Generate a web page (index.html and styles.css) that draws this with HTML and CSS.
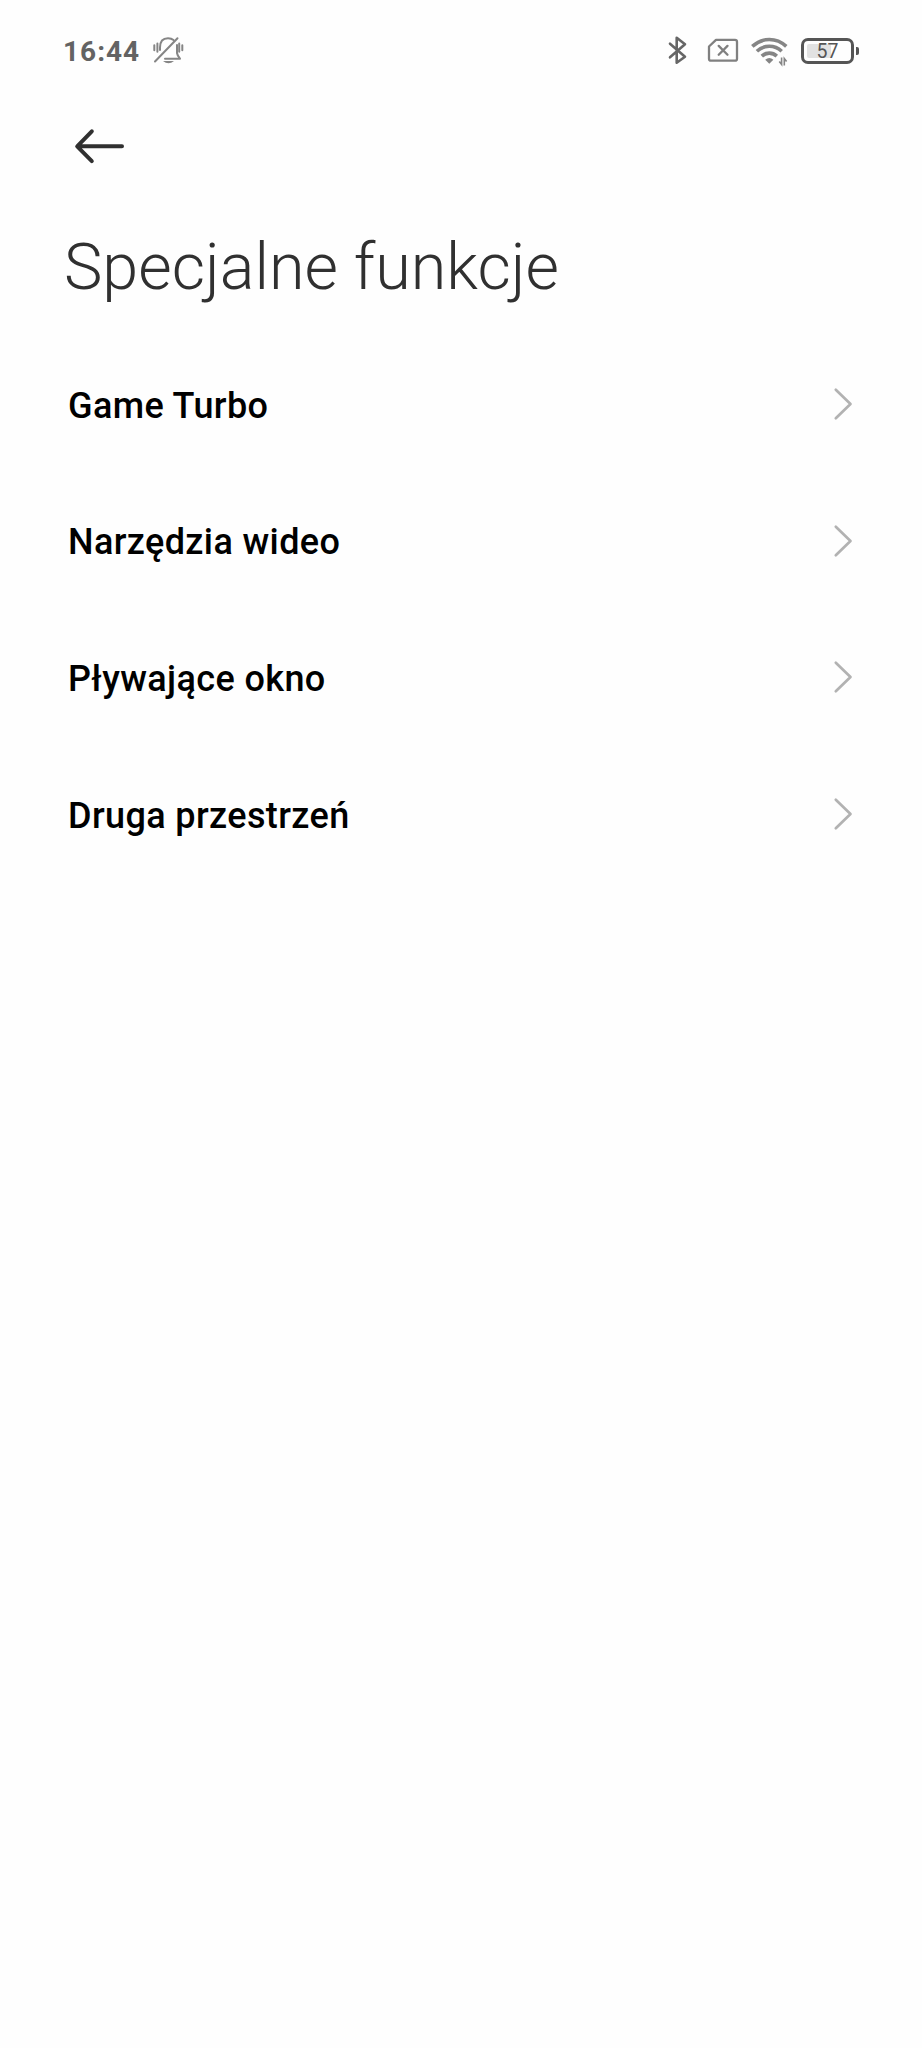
FILE: index.html
```html
<!DOCTYPE html>
<html lang="pl">
<head>
<meta charset="utf-8">
<title>Specjalne funkcje</title>
<link rel="stylesheet" href="styles.css">
</head>
<body>
<header class="status">
  <span class="clock">16:44</span>
  <svg class="bell" width="34" height="34" viewBox="151 34 34 34">
    <path d="M160 50V47.5Q160 38.2 168 38.2Q171.500 38.200 173.500 40M177 45V53Q177.400 55.800 180 58.700H165"/>
    <path d="M155 61.500L177.500 38.200M154.300 45.200v5M157.400 43.500v8.200M179.200 43.500v8.200M182.300 45.200v5"/>
    <path class="solid" d="M163 61h11q-5.500 4.500-11 0z"/>
  </svg>
  <span class="spacer"></span>
  <svg class="bluetooth" width="24" height="34" viewBox="665 34 24 34">
    <path d="M670 43.700L685 56.700L676.700 62.700V37.800L685 44.300L670 57.300"/>
  </svg>
  <svg class="sim" width="36" height="34" viewBox="705 34 36 34">
    <path d="M716 39.800H735Q737 39.800 737 41.800V58.700Q737 60.700 735 60.700H711Q709 60.700 709 58.700V46.500Z"/>
    <path d="M718.700 45.900L727.500 54.800M727.500 45.900L718.700 54.800"/>
  </svg>
  <svg class="wifi" width="40" height="34" viewBox="750 34 40 34">
    <path d="M752.300 46.400Q759.800 39.500 769.300 39.500T786.300 46.400M756.900 51.300Q762.200 46.300 769.300 46.300T781.700 51.300M761.800 56.100Q765 53.100 769.300 53.100T776.800 56.100"/>
    <path class="solid" d="M765.200 59.800Q769.300 56.300 773.400 59.800L769.300 63.800Z"/>
    <path class="data" d="M779.300 61.500L781.600 64.500V57.500M784.300 65.500V58.500L786.600 61.500"/>
  </svg>
  <span class="battery"><span class="level"></span><span class="percent">57</span><span class="nub"></span></span>
</header>
<nav class="toolbar">
  <svg class="back" width="56" height="40" viewBox="72 126 56 40">
    <path d="M91.800 131.300L77.200 146.300L91.800 161.100M77.500 146.300H122"/>
  </svg>
</nav>
<h1 class="title">Specjalne funkcje</h1>
<main class="list">
  <div class="row"><span class="label">Game Turbo</span><svg class="chevron" width="20" height="34" viewBox="0 0 20 34"><path d="M2.800 2.800L17.500 17L2.800 31.200"/></svg></div>
  <div class="row"><span class="label">Narzędzia wideo</span><svg class="chevron" width="20" height="34" viewBox="0 0 20 34"><path d="M2.800 2.800L17.500 17L2.800 31.200"/></svg></div>
  <div class="row"><span class="label">Pływające okno</span><svg class="chevron" width="20" height="34" viewBox="0 0 20 34"><path d="M2.800 2.800L17.500 17L2.800 31.200"/></svg></div>
  <div class="row"><span class="label">Druga przestrzeń</span><svg class="chevron" width="20" height="34" viewBox="0 0 20 34"><path d="M2.800 2.800L17.500 17L2.800 31.200"/></svg></div>
</main>
</body>
</html>
```

FILE: styles.css
```css
* { box-sizing: border-box; }
body {
  margin: 0;
  min-height: 2048px;
  background: #fefefe;
  font-family: Roboto, sans-serif;
}
svg {
  display: block;
  flex: none;
  fill: none;
  stroke-linecap: round;
  stroke-linejoin: round;
}
.status {
  display: flex;
  align-items: center;
  height: 102px;
  padding: 0 62px 0 63px;
}
.clock {
  width: 88px;
  padding-top: 2px;
  font-size: 28px;
  font-weight: 700;
  line-height: 34px;
  letter-spacing: 1px;
  color: #636363;
}
.spacer { flex: 1; }
.bell { stroke: #858585; stroke-width: 2; }
.bell .solid { fill: #858585; stroke: none; }
.bluetooth { margin-right: 16px; stroke: #666; stroke-width: 2.6; }
.sim { margin-right: 9px; stroke: #808080; stroke-width: 2.3; }
.wifi { margin-right: 11px; stroke: #858585; stroke-width: 3.6; stroke-linecap: butt; }
.wifi .solid { fill: #858585; stroke: none; }
.wifi .data { stroke-width: 1.6; stroke-linejoin: miter; }
.battery {
  position: relative;
  display: flex;
  align-items: center;
  justify-content: center;
  width: 53px;
  height: 26px;
  margin-right: 6px;
  border: 3.500px solid #555;
  border-radius: 7px;
}
.level {
  position: absolute;
  left: 3px;
  top: 3px;
  width: 24px;
  height: 14px;
  border-radius: 2px;
  background: #e2e2e2;
}
.percent {
  position: relative;
  padding-top: 1px;
  font-size: 19.500px;
  line-height: 20px;
  color: #555;
}
.nub {
  position: absolute;
  right: -8px;
  top: 6px;
  width: 3px;
  height: 8px;
  border-radius: 0 2px 2px 0;
  background: #555;
}
.toolbar { height: 90px; padding: 24px 72px 0; }
.back { stroke: #303030; stroke-width: 4; }
.title {
  margin: 0;
  padding: 37px 63px 0 64px;
  height: 144px;
  font-size: 64.700px;
  font-weight: 300;
  line-height: 76px;
  color: #303030;
}
.row {
  display: flex;
  align-items: center;
  justify-content: space-between;
  height: 136.600px;
  padding: 0 69px 0 68px;
  font-size: 36px;
  font-weight: 500;
  line-height: 42px;
  color: #000;
}
.label { padding-top: 3px; letter-spacing: 0.380px; }
.chevron { stroke: #b2b2b2; stroke-width: 2.7; }
```
